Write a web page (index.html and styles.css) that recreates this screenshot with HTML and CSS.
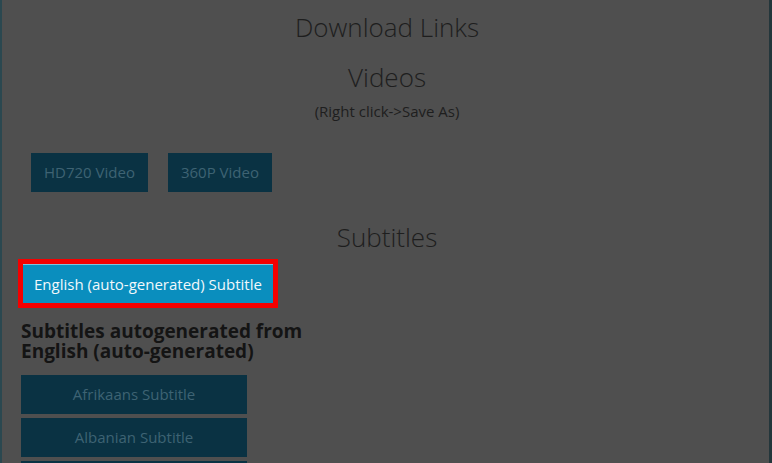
FILE: index.html
```html
<!DOCTYPE html>
<html>
<head>
<meta charset="utf-8">
<link rel="stylesheet" href="styles.css">
</head>
<body>
<div class="frame">
  <div class="page">
    <h1 class="title">Download Links</h1>
    <h2 class="section">Videos</h2>
    <p class="hint">(Right click-&gt;Save As)</p>
    <div class="video-row">
      <a class="btn">HD720 Video</a>
      <a class="btn">360P Video</a>
    </div>
    <h2 class="section subs">Subtitles</h2>
    <div class="highlight">
      <a class="btn-primary">English (auto-generated) Subtitle</a>
    </div>
    <h3 class="auto-title">Subtitles autogenerated from<br>English (auto-generated)</h3>
    <div class="sub-list">
      <a class="btn sub">Afrikaans Subtitle</a>
      <a class="btn sub">Albanian Subtitle</a>
      <a class="btn sub">Amharic Subtitle</a>
    </div>
  </div>
</div>
</body>
</html>
```
FILE: styles.css
```css
html, body {
  margin: 0;
  padding: 0;
  height: 100%;
  overflow: hidden;
}
body {
  background: #4f4f4f;
  font-family: "Open Sans", "DejaVu Sans", sans-serif;
}
.frame {
  height: 463px;
  overflow: hidden;
  border-left: 2px solid #2b4850;
  border-right: 3px solid #23363b;
  box-sizing: border-box;
  background: #4f4f4f;
}
.page {
  padding: 0 16px 0 19px;
  display: flex;
  flex-direction: column;
}
.title, .section {
  margin: 0;
  text-align: center;
  font-weight: 300;
  font-size: 26px;
  color: #1e1e1e;
  line-height: 36px;
}
.title {
  margin-top: 9px;
}
.section {
  margin-top: 14px;
}
.hint {
  margin: 6px 0 0;
  text-align: center;
  font-size: 15px;
  color: #1e1e1e;
  line-height: 20px;
}
.video-row {
  display: flex;
  gap: 20px;
  margin-top: 32px;
  padding-left: 10px;
}
.btn {
  display: block;
  background: #0a3243;
  color: #3e6373;
  font-size: 15px;
  line-height: 39px;
  height: 39px;
  padding: 0 13px;
}
.subs {
  margin-top: 27px;
}
.highlight {
  align-self: flex-start;
  margin-top: 4px;
  margin-left: -3px;
  border: 5px solid #f40000;
  display: flex;
}
.btn-primary {
  display: block;
  background: #0a8ebe;
  border-top: 1px solid #7fc3dc;
  color: #f2f8fb;
  font-size: 15px;
  line-height: 38px;
  padding: 0 11px;
}
.auto-title {
  margin: 13px 0 0 0;
  font-size: 19px;
  font-weight: 700;
  line-height: 20px;
  color: #141414;
}
.sub-list {
  margin-top: 14px;
  display: flex;
  flex-direction: column;
  gap: 4px;
  width: 226px;
}
.sub {
  text-align: center;
  padding: 0;
}
```
